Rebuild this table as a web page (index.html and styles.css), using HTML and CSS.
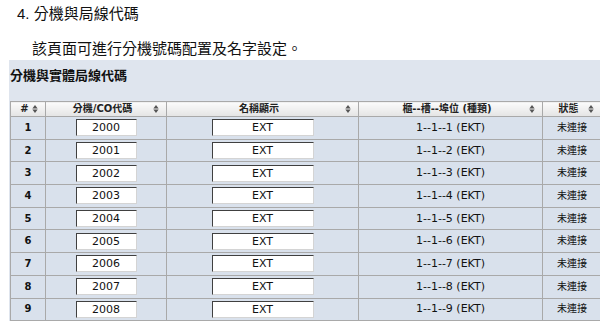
FILE: index.html
```html
<!DOCTYPE html>
<html lang="zh-Hant">
<head>
<meta charset="utf-8">
<link rel="stylesheet" href="styles.css">
</head>
<body>
<h2 class="title">4. 分機與局線代碼</h2>
<p class="desc">該頁面可進行分機號碼配置及名字設定。</p>
<div class="panel">
  <div class="panel-title">分機與實體局線代碼</div>
  <table class="grid">
    <colgroup>
      <col class="c1"><col class="c2"><col class="c3"><col class="c4"><col class="c5">
    </colgroup>
    <thead>
      <tr>
        <th><div class="th"><span class="lbl">#</span><svg class="sort" viewBox="0 0 6 9"><path d="M0 4L3 0L6 4Z M0 5L3 9L6 5Z"/></svg></div></th>
        <th><div class="th"><span class="lbl">分機/CO代碼</span><svg class="sort" viewBox="0 0 6 9"><path d="M0 4L3 0L6 4Z M0 5L3 9L6 5Z"/></svg></div></th>
        <th><div class="th"><span class="lbl">名稱顯示</span><svg class="sort" viewBox="0 0 6 9"><path d="M0 4L3 0L6 4Z M0 5L3 9L6 5Z"/></svg></div></th>
        <th><div class="th"><span class="lbl">櫃--槽--埠位 (種類)</span><svg class="sort" viewBox="0 0 6 9"><path d="M0 4L3 0L6 4Z M0 5L3 9L6 5Z"/></svg></div></th>
        <th><div class="th"><span class="lbl">狀態</span><svg class="sort" viewBox="0 0 6 9"><path d="M0 4L3 0L6 4Z M0 5L3 9L6 5Z"/></svg></div></th>
      </tr>
    </thead>
    <tbody>
      <tr><td class="num">1</td><td><input class="ext" value="2000"></td><td><input class="name" value="EXT"></td><td>1--1--1 (EKT)</td><td class="st">未連接</td></tr>
      <tr><td class="num">2</td><td><input class="ext" value="2001"></td><td><input class="name" value="EXT"></td><td>1--1--2 (EKT)</td><td class="st">未連接</td></tr>
      <tr><td class="num">3</td><td><input class="ext" value="2002"></td><td><input class="name" value="EXT"></td><td>1--1--3 (EKT)</td><td class="st">未連接</td></tr>
      <tr><td class="num">4</td><td><input class="ext" value="2003"></td><td><input class="name" value="EXT"></td><td>1--1--4 (EKT)</td><td class="st">未連接</td></tr>
      <tr><td class="num">5</td><td><input class="ext" value="2004"></td><td><input class="name" value="EXT"></td><td>1--1--5 (EKT)</td><td class="st">未連接</td></tr>
      <tr><td class="num">6</td><td><input class="ext" value="2005"></td><td><input class="name" value="EXT"></td><td>1--1--6 (EKT)</td><td class="st">未連接</td></tr>
      <tr><td class="num">7</td><td><input class="ext" value="2006"></td><td><input class="name" value="EXT"></td><td>1--1--7 (EKT)</td><td class="st">未連接</td></tr>
      <tr><td class="num">8</td><td><input class="ext" value="2007"></td><td><input class="name" value="EXT"></td><td>1--1--8 (EKT)</td><td class="st">未連接</td></tr>
      <tr><td class="num">9</td><td><input class="ext" value="2008"></td><td><input class="name" value="EXT"></td><td>1--1--9 (EKT)</td><td class="st">未連接</td></tr>
    </tbody>
  </table>
</div>
</body>
</html>
```
FILE: styles.css
```css
html, body {
  margin: 0;
  padding: 0;
  background: #ffffff;
  overflow: hidden;
}
body {
  width: 600px;
  height: 324px;
  font-family: "Liberation Sans", "Noto Sans CJK TC", sans-serif;
  color: #1a1a1a;
}
.title {
  margin: 4px 0 0 17px;
  font-size: 15px;
  font-weight: normal;
  line-height: 20px;
  color: #111;
}
.desc {
  margin: 15px 0 1px 32px;
  font-size: 15px;
  line-height: 20px;
  color: #111;
}
.panel {
  margin-left: 9px;
  width: 600px;
  background: #dfe5ee;
}
.panel-title {
  padding: 6px 0 15px 1px;
  font-size: 13px;
  font-weight: bold;
  line-height: 20px;
  color: #111;
}
.grid {
  margin-left: 1px;
  width: 591px;
  table-layout: fixed;
  border-collapse: collapse;
  font-family: "DejaVu Sans", "Noto Sans CJK TC", sans-serif;
  font-size: 11px;
  color: #111;
}
.c1 { width: 35px; }
.c2 { width: 121px; }
.c3 { width: 192px; }
.c4 { width: 184px; }
.c5 { width: 59px; }
.grid th {
  height: 14px;
  padding: 0;
  border: 1px solid #a9a9a9;
  background: linear-gradient(#fbfbfb, #e4e4e4);
  font-size: 10px;
  font-weight: bold;
  line-height: 14px;
  color: #222;
}
.th {
  display: grid;
  grid-template-columns: 1fr auto 1fr;
  align-items: center;
  padding: 0 7px 0 0;
}
.th .lbl {
  grid-column: 2;
  white-space: nowrap;
}
.sort {
  grid-column: 3;
  justify-self: end;
  width: 6px;
  height: 8px;
  fill: #555;
}
.grid tbody tr {
  height: 22.7px;
}
.grid td {
  padding: 0;
  border: 1px solid #a9a9a9;
  background: #d9e1ec;
  text-align: center;
  vertical-align: middle;
  line-height: 14px;
}
.grid td.num {
  font-size: 10px;
  font-weight: bold;
}
.grid td.st {
  font-size: 10px;
}
.grid input {
  box-sizing: border-box;
  height: 17px;
  margin: 0;
  padding: 0;
  border: 1px solid;
  border-color: #404040 #d4d4d4 #d4d4d4 #404040;
  background: #fff;
  font-family: "DejaVu Sans", sans-serif;
  font-size: 11px;
  color: #111;
  text-align: center;
  vertical-align: middle;
}
.grid input.ext { width: 61px; }
.grid input.name { width: 102px; }
```
